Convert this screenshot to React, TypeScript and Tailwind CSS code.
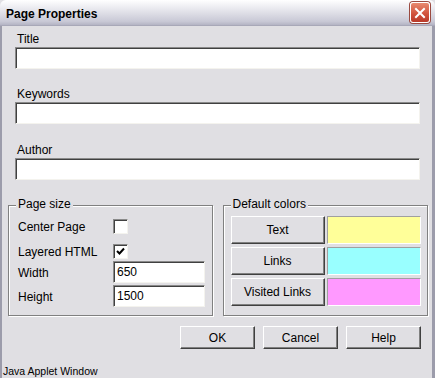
import React from 'react';

const sunken =
  'bg-white border-t border-l border-[#8a8a8a] border-b border-r border-b-[#f4f3ee] border-r-[#f4f3ee] shadow-[inset_1px_1px_0_#404040]';
const raised =
  'bg-[#e0dfe3] border border-t-white border-l-white border-b-[#404040] border-r-[#404040] shadow-[inset_-1px_-1px_0_#808080]';
const etched =
  'relative border border-[#808080] shadow-[inset_1px_1px_0_#ffffff,1px_1px_0_#ffffff]';

function Field({ label, top }: { label: string; top: string }) {
  return (
    <div className={`flex flex-col ${top}`}>
      <span className="h-[14px] leading-[14px] pl-[2px]">{label}</span>
      <div className={`${sunken} h-[22px] mt-[1px]`} />
    </div>
  );
}

function Check({ checked }: { checked?: boolean }) {
  return (
    <div className={`${sunken} w-[15px] h-[15px] flex items-center justify-center`}>
      {checked && (
        <svg width="9" height="9" viewBox="0 0 9 9">
          <path d="M1 4 L3.5 6.5 L8 1.5" stroke="#000" strokeWidth="2" fill="none" />
        </svg>
      )}
    </div>
  );
}

function ColorRow({ label, color, top }: { label: string; color: string; top: string }) {
  return (
    <div className={`flex gap-[2px] h-[28px] ${top}`}>
      <button className={`${raised} w-[94px] h-full flex items-center justify-center`}>{label}</button>
      <div
        className={`w-[94px] h-full border border-t-[#a0a0a0] border-l-[#a0a0a0] border-b-white border-r-white ${color}`}
      />
    </div>
  );
}

export default function App() {
  return (
    <div className="w-[435px] h-[378px] overflow-hidden flex flex-col bg-[#e0dfe3] text-[12px] text-black font-['Liberation_Sans',Arial,sans-serif]">
      {/* Title bar */}
      <div className="h-[26px] shrink-0 flex items-center justify-between pl-[6px] pr-[5px] rounded-t-[6px] bg-[linear-gradient(to_bottom,#ffffff,#ececf1_30%,#c9c9d6_85%,#b4b4c4)] border-b border-[#a8a8b8]">
        <span className="font-bold text-[12px] mt-[2px]">Page Properties</span>
        <div className="w-[20px] h-[21px] rounded-[3px] border border-white bg-[linear-gradient(to_bottom,#e88a70,#d0503a_60%,#b83a2a)] flex items-center justify-center shadow-[0_0_0_1px_#9a4a40]">
          <svg width="12" height="12" viewBox="0 0 12 12">
            <path d="M2 2 L10 10 M10 2 L2 10" stroke="#fff" strokeWidth="2" strokeLinecap="square" />
          </svg>
        </div>
      </div>

      {/* Body */}
      <div className="flex-1 flex flex-col border-l-2 border-r-[3px] border-[#9c9cab]">
        <div className="flex flex-col pt-[6px] pl-[13px] pr-[12px]">
          <Field label="Title" top="" />
          <Field label="Keywords" top="mt-[18px]" />
          <Field label="Author" top="mt-[19px]" />
        </div>

        <div className="flex gap-[10px] pl-[6px] pr-[4px] mt-[25px]">
          {/* Page size */}
          <div className={`${etched} w-[205px] h-[111px] pt-[12px] pl-[9px] pr-[7px]`}>
            <span className="absolute left-[7px] top-[-9px] px-[2px] bg-[#e0dfe3] leading-[14px]">Page size</span>
            <div className="grid grid-cols-[95px_1fr] items-center">
              <span className="leading-[14px] mt-[2px]">Center Page</span>
              <Check />
              <span className="leading-[14px] mt-[11px]">Layered HTML</span>
              <div className="mt-[9px]"><Check checked /></div>
              <span className="leading-[14px] mt-[3px]">Width</span>
              <div className={`${sunken} h-[22px] mt-[2px] pl-[3px] leading-[20px]`}>650</div>
              <span className="leading-[14px] mt-[3px]">Height</span>
              <div className={`${sunken} h-[22px] mt-[2px] pl-[3px] leading-[20px]`}>1500</div>
            </div>
          </div>

          {/* Default colors */}
          <div className={`${etched} w-[206px] h-[111px] pt-[10px] pl-[7px]`}>
            <span className="absolute left-[7px] top-[-9px] px-[2px] bg-[#e0dfe3] leading-[14px]">Default colors</span>
            <ColorRow label="Text" color="bg-[#ffff99]" top="" />
            <ColorRow label="Links" color="bg-[#99ffff]" top="mt-[3px]" />
            <ColorRow label="Visited Links" color="bg-[#ff99ff]" top="mt-[3px]" />
          </div>
        </div>

        <div className="flex justify-end gap-[8px] pr-[11px] mt-[10px]">
          <button className={`${raised} w-[75px] h-[23px]`}>OK</button>
          <button className={`${raised} w-[75px] h-[23px]`}>Cancel</button>
          <button className={`${raised} w-[75px] h-[23px]`}>Help</button>
        </div>

        <div className="mt-auto pl-[1px] text-[10.5px] leading-[13px]">Java Applet Window</div>
      </div>
    </div>
  );
}
